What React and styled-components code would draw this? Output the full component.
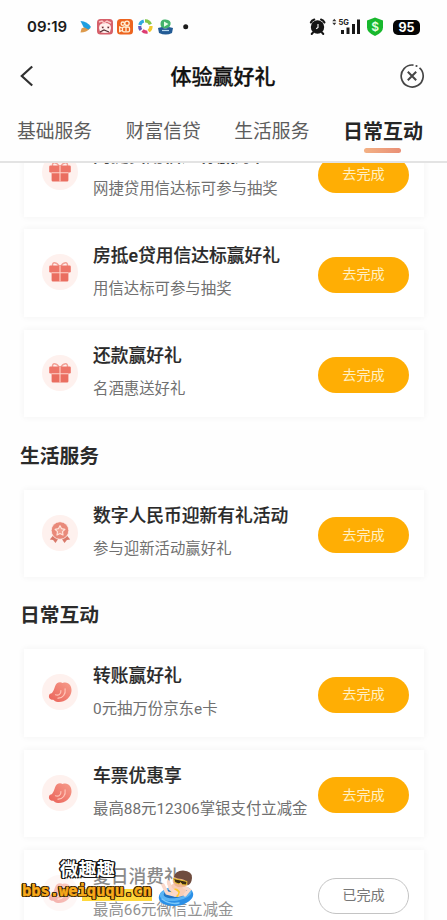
import React from "react";
import styled, { createGlobalStyle } from "styled-components";

const GlobalStyle = createGlobalStyle`
  * {
    box-sizing: border-box;
  }
  body {
    margin: 0;
    background: #fefefe;
    font-family: Roboto, "Noto Sans CJK SC", sans-serif;
    overflow: hidden;
  }
`;

const Screen = styled.div`
  position: relative;
  display: flex;
  flex-direction: column;
  width: 447px;
  height: 920px;
  overflow: hidden;
  background: #fefefe;
`;

const StatusBar = styled.div`
  display: flex;
  align-items: center;
  justify-content: space-between;
  height: 52px;
  padding: 2px 27px 0 26px;
`;

const Clock = styled.span`
  width: 53px;
  padding-left: 1px;
  font-family: Inter, sans-serif;
  font-size: 15px;
  font-weight: 600;
  line-height: 20px;
  color: #1b1b1b;
`;

const StatusGroup = styled.div`
  display: flex;
  align-items: center;
  svg {
    display: block;
  }
`;

const Battery = styled.span`
  width: 27px;
  height: 15px;
  margin-left: 9px;
  border-radius: 5px;
  background: #050505;
  color: #fff;
  font: 700 12.5px/15px Inter, sans-serif;
  text-align: center;
`;

const NavBar = styled.div`
  display: grid;
  grid-template-columns: 62px 1fr 60px;
  align-items: center;
  height: 48px;
  padding: 0 22px 0 19px;
  h1 {
    margin: 2px 0 0;
    font-size: 21px;
    font-weight: 500;
    line-height: 30px;
    color: #111;
    text-align: center;
    -webkit-text-stroke: 0.3px #111;
  }
  svg {
    display: block;
  }
  svg:last-child {
    justify-self: end;
  }
`;

const Tabs = styled.nav`
  display: flex;
  justify-content: space-between;
  height: 63px;
  flex: none;
  padding: 17px 24px 0 17px;
  border-bottom: 2px solid #e3e3e3;
`;

const Tab = styled.div`
  display: flex;
  flex-direction: column;
  align-items: center;
  font-size: ${(props) => (props.$active ? "20px" : "18.8px")};
  font-weight: ${(props) => (props.$active ? 700 : 400)};
  line-height: 31px;
  color: ${(props) => (props.$active ? "#262626" : "#5c5c5c")};
  white-space: nowrap;
  &::after {
    content: "";
    width: 37px;
    height: 5px;
    border-radius: 3px;
    background: ${(props) =>
      props.$active ? "linear-gradient(90deg, #f3b184, #e98f76)" : "none"};
  }
`;

const Viewport = styled.main`
  flex: 1;
  min-height: 0;
  overflow: hidden;
`;

/* the list is scrolled a little under the tabs */
const List = styled.div`
  margin-top: -34px;
  padding: 0 23px 0 24px;
`;

const SectionTitle = styled.h2`
  height: 59.4px;
  margin: 0 0 0 -4px;
  padding-top: 9.5px;
  font-size: 19.8px;
  font-weight: 700;
  line-height: 34px;
  color: #2b2b2b;
`;

const Card = styled.div`
  display: flex;
  height: 87.6px;
  margin-bottom: 12.8px;
  padding: 0 15px 0 18px;
  background: #fff;
  box-shadow: 0 0 6px 1px rgba(0, 0, 0, 0.04);
`;

const IconDisc = styled.div`
  display: flex;
  align-items: center;
  justify-content: center;
  width: 36px;
  height: 36px;
  margin-top: 25px;
  border-radius: 50%;
  background: #fef1ee;
  opacity: ${(props) => (props.$done ? 0.5 : 1)};
`;

const CardText = styled.div`
  flex: 1;
  min-width: 0;
  padding: 12.6px 0 0 15px;
  white-space: nowrap;
`;

const CardTitle = styled.div`
  font-size: 17.75px;
  font-weight: 500;
  line-height: 28px;
  color: ${(props) => (props.$done ? "#8a8a8a" : "#292929")};
  -webkit-text-stroke: ${(props) => (props.$done ? "0" : "0.2px #292929")};
`;

const CardDesc = styled.div`
  margin-top: 5px;
  font-size: 15.4px;
  line-height: 28px;
  color: ${(props) => (props.$done ? "#929292" : "#707070")};
`;

const Action = styled.button`
  width: 91px;
  height: 36px;
  flex: none;
  margin-top: 27.5px;
  padding: 0 0 1px;
  border: ${(props) => (props.$done ? "1px solid #c4c4c4" : "0")};
  border-radius: 18px;
  background: ${(props) => (props.$done ? "#fff" : "#ffae04")};
  color: ${(props) => (props.$done ? "#777" : "#fff0c5")};
  font-family: inherit;
  font-size: 14.2px;
  line-height: 32px;
`;

const Watermark = styled.div`
  position: absolute;
  left: 22px;
  top: 857px;
  width: 180px;
  height: 54px;
`;

const MarkName = styled.div`
  padding-left: 38px;
  font-size: 18.3px;
  font-weight: 700;
  line-height: 25px;
  color: #fff;
  text-shadow: 1px 1px 0 #151515, -1px 1px 0 #151515, 1px -1px 0 #151515,
    -1px -1px 0 #151515, 1.5px 0 0 #151515, -1.5px 0 0 #151515;
`;

const MarkUrl = styled.div`
  width: 131px;
  font-family: "DejaVu Sans Mono", monospace;
  font-size: 15.4px;
  font-weight: 700;
  line-height: 18px;
  padding-bottom: 4px;
  color: #f8aa1a;
  background: linear-gradient(#ffd83c, #ffd83c) 60px 7px / 70px 12px no-repeat;
  -webkit-text-stroke: 0.5px #f8aa1a;
  text-shadow: 1px 1px 0 #2a1d05, -1px 1px 0 #2a1d05, 1px -1px 0 #2a1d05,
    -1px -1px 0 #2a1d05, 1.4px 0 0 #2a1d05, -1.4px 0 0 #2a1d05;
`;

const Swimmer = styled.svg`
  position: absolute;
  left: 135px;
  top: 12px;
`;

const GiftIcon = () => (
  <svg width="24" height="22" viewBox="0 0 24 22">
    <path
      d="M11.5 6C9 1 3.5 0 4.6 5.5M12.5 6C15 1 20.5 0 19.4 5.5"
      fill="none"
      stroke="#f2a196"
      strokeWidth="1.5"
    />
    <rect x="1.2" y="4.5" width="21.6" height="7" rx="1.2" fill="#ed7568" />
    <path d="M3.6 11h16.8v8.2q0 1.3-1.3 1.3H4.9q-1.3 0-1.3-1.3z" fill="#ea6e60" />
    <path d="M12 5v15.5M3.6 11.8h16.8" stroke="#ffd5cb" strokeWidth="1.1" />
  </svg>
);

const MedalIcon = () => (
  <svg width="22" height="23" viewBox="0 0 22 23">
    <path d="M4.5 14 .8 18.5l3.3.6L6.5 22l3-4.5zM17.5 14l3.7 4.5-3.3.6-2.4 2.9-3-4.5z" fill="#d97a6b" />
    <circle cx="11" cy="9.5" r="8.8" fill="#e98a7a" stroke="#fef1ee" strokeWidth=".8" />
    <path
      d="m11 4.7 1.6 3 3.3.6-2.4 2.4.5 3.3-3-1.5L8 14l.5-3.3-2.4-2.4 3.3-.6z"
      fill="#f0a191"
      stroke="#ffe3da"
      strokeWidth="1.2"
      strokeLinejoin="round"
    />
  </svg>
);

const BeanIcon = () => (
  <svg width="24" height="22" viewBox="0 0 24 22">
    <defs>
      <linearGradient id="bean" x1="1" y1="0" x2="0" y2="1">
        <stop offset="0" stopColor="#f69c8b" />
        <stop offset="1" stopColor="#ea6158" />
      </linearGradient>
    </defs>
    <path
      d="M7 5.5C8 1.5 12 .3 14.6 2 20 0 24 4.5 23.5 10c-.6 6.8-7 11.5-13.5 11-2.400-.2-3.500-1-4.700-2.200-3 .2-4.800-1.800-4.300-4.300.3-1.700 1.500-2.100 3-2.600C5.500 10 6.200 8 7 5.500Z"
      fill="url(#bean)"
    />
    <path
      d="M7.5 13.8c3 1.1 5.7-.8 5.4-4.2M10 17.2c4.8.2 8-4.3 7.1-9.4"
      fill="none"
      stroke="#ffc4b7"
      strokeWidth="1.2"
      strokeLinecap="round"
    />
  </svg>
);

const icons = { gift: GiftIcon, medal: MedalIcon, bean: BeanIcon };

const AppIcons = () => (
  <svg width="110" height="18" viewBox="79 18 110 18">
    <path d="m80.500 32.500 1-4 6.500-3 2.500 2.500q-4 4.500-10 4.500z" fill="#dd9a4c" />
    <path d="M80.500 21q7 .5 10.500 6l-2.500 2.500-5-2.500z" fill="#1f9fe0" />
    <rect x="97" y="19" width="16" height="15.500" rx="3.500" fill="#d6606a" />
    <path d="M99 28q0-5 6-5t6 5l-1 4q-5 2-10 0z" fill="#fff0ed" />
    <path d="M99 22l3-1 2 2 3-2 4 2M101 27h3m3 0h3" fill="none" stroke="#fbc5c3" strokeWidth="1.5" />
    <path d="M102 27.500h1.500m4 0h1.500M100 32l4-2 5 2" fill="none" stroke="#5c3138" strokeWidth="1.3" />
    <rect x="117" y="19" width="16" height="15.500" rx="3.500" fill="#ed641f" />
    <g fill="none" stroke="#fff2d8" strokeWidth="1.3">
      <circle cx="122.800" cy="23.700" r="1.700" />
      <circle cx="127" cy="23.300" r="2.200" />
      <rect x="122.500" y="27" width="7" height="4.800" rx="1.300" />
      <path d="m122 28-2.300-1v4.500l2.300-1M126 27v4.500" />
    </g>
    <g fill="none" strokeWidth="3.2">
      <path d="M139.800 25a5.500 5.500 0 0 1 4-4" stroke="#30a8e0" />
      <path d="M145 20.800a5.500 5.500 0 0 1 5.400 3.500" stroke="#82c64a" />
      <path d="M151 26a5.500 5.500 0 0 1-2.500 5" stroke="#f1c72d" />
      <path d="M147.500 32a5.500 5.500 0 0 1-5-1.500" stroke="#dd3b71" />
      <path d="M141 30a5.500 5.500 0 0 1-1.300-4" stroke="#6159bc" />
    </g>
    <path d="M160.500 24q0-5 5-4.500 6 .5 5 5-1 4-5 4-5 0-5-4.500z" fill="#42b36c" />
    <path d="m164 21.500 4.500 2.500-4.500 2.800z" fill="#e8ffe9" />
    <path d="M158 28l4-1q3 3 7 0l4 1-1 5q-6 3-13 0z" fill="#235b95" />
    <path d="M162 30.500h7" stroke="#b8d8ef" strokeWidth="1.2" />
    <circle cx="185.700" cy="26.700" r="2.500" fill="#1b1b1b" />
  </svg>
);

const SignalIcons = () => (
  <svg width="76" height="20" viewBox="308 17 76 20">
    <g fill="none" stroke="#151515" strokeWidth="2" strokeLinecap="round">
      <path d="M310.800 22.500q1-2.300 3.500-3M321 19.500q2.500.7 3.500 3M313 32.500l-1.300 1.500M322 32.500l1.300 1.500" />
    </g>
    <circle cx="317.500" cy="27" r="6.700" fill="#151515" />
    <path d="M318 24v3.500l-1.800 1.300" fill="none" stroke="#fff" strokeWidth="1.1" />
    <path d="m332.300 21.300 2-2.500 2 2.500zM332.300 22.800l2 2.500 2-2.500z" fill="#333" />
    <text x="338.500" y="25" fontFamily="Inter, sans-serif" fontSize="7.5" fontWeight="700" fill="#222">
      5G
    </text>
    <path d="M342.500 30v4M348 27.500V34M353.500 24v10M358.500 19.500V34" stroke="#181818" strokeWidth="3" />
    <path d="m375 17.500 8 3v7q0 5-8 8.500-8-3.500-8-8.500v-7z" fill="#18b82d" />
    <text x="371.200" y="31" fontFamily="Inter, sans-serif" fontSize="12" fontWeight="600" fill="#e4ffe0">
      $
    </text>
  </svg>
);

const BackIcon = () => (
  <svg width="18" height="24" viewBox="0 0 18 24">
    <path d="M13.200 2.500 2.800 12l10.400 9.500" fill="none" stroke="#303030" strokeWidth="2.2" />
  </svg>
);

const CloseIcon = () => (
  <svg width="26" height="26" viewBox="0 0 26 26">
    <g fill="none" stroke="#454545" strokeWidth="1.7">
      <path d="M20.500 4.800A11 11 0 1 1 14.500 2.100" />
      <path d="m8.800 8.800 8.400 8.400m0-8.400-8.400 8.400" strokeWidth="2" />
    </g>
    <circle cx="17.500" cy="3" r="1.100" fill="#454545" />
  </svg>
);

const TubeKid = () => (
  <Swimmer width="38" height="38" viewBox="157 869 38 38">
    <g transform="rotate(-8 176 896)">
      <ellipse cx="176" cy="896" rx="17.300" ry="9.800" fill="#2b8fe6" />
      <ellipse cx="176" cy="893.500" rx="16" ry="7.300" fill="#5ab4f4" />
      <ellipse cx="176" cy="893" rx="12" ry="5" fill="#1f74c4" />
    </g>
    <path d="M171 885q6-4 13 0l3 7q-6 8-16 3z" fill="#f8cdb6" />
    <path d="M171 890q6-4 9 2l-2 5-8-2z" fill="#ffc928" />
    <path
      d="m163 885 4 8 8 2M168.500 882l2 7 6 4M184 887l5 3-4 5"
      fill="none"
      stroke="#fad8ca"
      strokeWidth="3.5"
      strokeLinecap="round"
    />
    <ellipse cx="181" cy="881" rx="8.300" ry="6.300" fill="#efb592" />
    <path d="M174 877q1-6.500 9-6.500 9.500.5 9 7.500-.5 6-4.500 7.500-.5-5.500-6-6.500-4 0-7.500-2z" fill="#6f4c3e" />
    <path
      d="m173.500 878.500 13.500 3-.5 3.500-4-.300-2-2.200-1.500 1.500-4-1.500z"
      fill="#3b2d14"
      stroke="#e5bb2e"
      strokeWidth="1"
    />
    <path d="M162 899q8 6 17 4" fill="none" stroke="#7cc8f8" strokeWidth="1.5" strokeLinecap="round" />
  </Swimmer>
);

const tabs = ["基础服务", "财富信贷", "生活服务", "日常互动"];

const sections = [
  {
    items: [
      { icon: "gift", title: "网捷贷用信达标赢好礼", desc: "网捷贷用信达标可参与抽奖" },
      { icon: "gift", title: "房抵e贷用信达标赢好礼", desc: "用信达标可参与抽奖" },
      { icon: "gift", title: "还款赢好礼", desc: "名酒惠送好礼" },
    ],
  },
  {
    name: "生活服务",
    items: [
      { icon: "medal", title: "数字人民币迎新有礼活动", desc: "参与迎新活动赢好礼" },
    ],
  },
  {
    name: "日常互动",
    items: [
      { icon: "bean", title: "转账赢好礼", desc: "0元抽万份京东e卡" },
      { icon: "bean", title: "车票优惠享", desc: "最高88元12306掌银支付立减金" },
      { icon: "bean", title: "夏日消费礼", desc: "最高66元微信立减金", done: true },
    ],
  },
];

const TaskCard = ({ icon, title, desc, done }) => {
  const Icon = icons[icon];
  return (
    <Card>
      <IconDisc $done={done}>
        <Icon />
      </IconDisc>
      <CardText>
        <CardTitle $done={done}>{title}</CardTitle>
        <CardDesc $done={done}>{desc}</CardDesc>
      </CardText>
      <Action $done={done}>{done ? "已完成" : "去完成"}</Action>
    </Card>
  );
};

const App = () => (
  <>
    <GlobalStyle />
    <Screen>
      <StatusBar>
        <StatusGroup>
          <Clock>09:19</Clock>
          <AppIcons />
        </StatusGroup>
        <StatusGroup>
          <SignalIcons />
          <Battery>95</Battery>
        </StatusGroup>
      </StatusBar>
      <NavBar>
        <BackIcon />
        <h1>体验赢好礼</h1>
        <CloseIcon />
      </NavBar>
      <Tabs>
        {tabs.map((name) => (
          <Tab key={name} $active={name === "日常互动"}>
            {name}
          </Tab>
        ))}
      </Tabs>
      <Viewport>
        <List>
          {sections.map((section, i) => (
            <section key={i}>
              {section.name && <SectionTitle>{section.name}</SectionTitle>}
              {section.items.map((item) => (
                <TaskCard key={item.title} {...item} />
              ))}
            </section>
          ))}
        </List>
      </Viewport>
      {/* forum mark over the last card */}
      <Watermark>
        <MarkName>微趣趣</MarkName>
        <MarkUrl>bbs.weiququ.cn</MarkUrl>
        <TubeKid />
      </Watermark>
    </Screen>
  </>
);

export default App;
